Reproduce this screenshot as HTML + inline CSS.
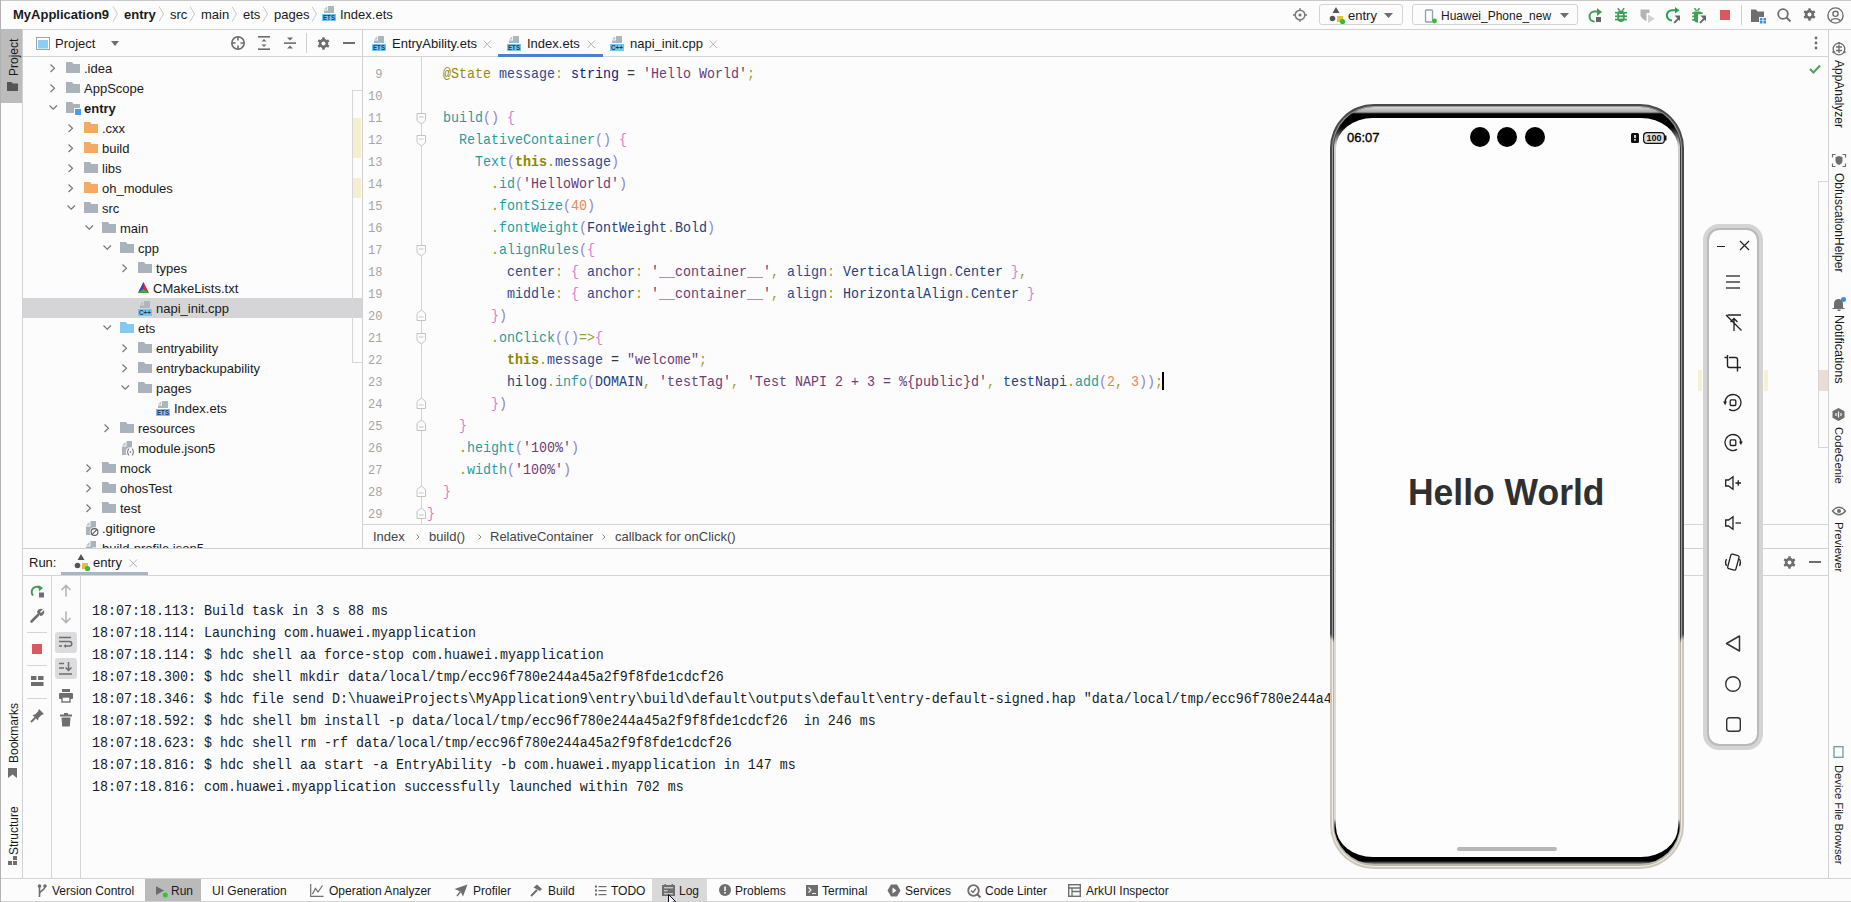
<!DOCTYPE html>
<html><head><meta charset="utf-8"><title>DevEco</title><style>*{margin:0;padding:0;box-sizing:border-box}
html,body{width:1851px;height:902px;overflow:hidden;background:#fcfcfc;font-family:"Liberation Sans",sans-serif;font-size:13px;color:#1f1f1f}
.a{position:absolute}
.t{position:absolute;white-space:pre}
svg{position:absolute;overflow:visible}
.clip{position:absolute;left:0;top:0;overflow:hidden}
</style></head><body>
<div class="a" style="left:0px;top:0px;width:1851px;height:29px;background:#fcfcfc;"></div>
<div class="a" style="left:0px;top:0px;width:1851px;height:1px;background:#c9c9cb;"></div>
<div class="a" style="left:0px;top:29px;width:1851px;height:1px;background:#d1d1d1;"></div>
<div class="t" style="left:13px;top:5.00px;font-size:13px;line-height:19px;color:#1a1a1a;font-weight:bold;">MyApplication9</div>
<div class="t" style="left:124px;top:5.00px;font-size:13px;line-height:19px;color:#1a1a1a;font-weight:bold;">entry</div>
<div class="t" style="left:170px;top:5.00px;font-size:13px;line-height:19px;color:#1a1a1a;">src</div>
<div class="t" style="left:201px;top:5.00px;font-size:13px;line-height:19px;color:#1a1a1a;">main</div>
<div class="t" style="left:243px;top:5.00px;font-size:13px;line-height:19px;color:#1a1a1a;">ets</div>
<div class="t" style="left:274px;top:5.00px;font-size:13px;line-height:19px;color:#1a1a1a;">pages</div>
<svg style="left:112px;top:6px;" width="7" height="16" viewBox="0 0 7 16"><path d="M1 0.5L5.5 8L1 15.5" fill="none" stroke="#c8c8c8" stroke-width="1"/></svg>
<svg style="left:158px;top:6px;" width="7" height="16" viewBox="0 0 7 16"><path d="M1 0.5L5.5 8L1 15.5" fill="none" stroke="#c8c8c8" stroke-width="1"/></svg>
<svg style="left:189px;top:6px;" width="7" height="16" viewBox="0 0 7 16"><path d="M1 0.5L5.5 8L1 15.5" fill="none" stroke="#c8c8c8" stroke-width="1"/></svg>
<svg style="left:231px;top:6px;" width="7" height="16" viewBox="0 0 7 16"><path d="M1 0.5L5.5 8L1 15.5" fill="none" stroke="#c8c8c8" stroke-width="1"/></svg>
<svg style="left:262px;top:6px;" width="7" height="16" viewBox="0 0 7 16"><path d="M1 0.5L5.5 8L1 15.5" fill="none" stroke="#c8c8c8" stroke-width="1"/></svg>
<svg style="left:311px;top:6px;" width="7" height="16" viewBox="0 0 7 16"><path d="M1 0.5L5.5 8L1 15.5" fill="none" stroke="#c8c8c8" stroke-width="1"/></svg>
<svg style="left:322px;top:6px;" width="14" height="16" viewBox="0 0 14 16"><path d="M6 0H12V7H2V4.5H6Z" fill="#adb5bd"/><path d="M2 3.5L5.2 0.3V3.5Z" fill="#b8c0c7"/><rect x="0" y="8" width="14" height="7" fill="#78c6f0"/><text x="7" y="14.4" font-family="Liberation Sans" font-weight="bold" font-size="7.2" text-anchor="middle" fill="#28384a" textLength="12" lengthAdjust="spacingAndGlyphs">ETS</text></svg>
<div class="t" style="left:340px;top:5.00px;font-size:13px;line-height:19px;color:#1a1a1a;">Index.ets</div>
<svg style="left:1293px;top:8px;" width="14" height="14" viewBox="0 0 14 14"><circle cx="7" cy="7" r="4.8" fill="none" stroke="#7a7a7a" stroke-width="1.6"/><circle cx="7" cy="7" r="1.6" fill="#7a7a7a"/><path d="M7 0V2.5M7 11.5V14M0 7H2.5M11.5 7H14" stroke="#7a7a7a" stroke-width="1.3"/></svg>
<div class="a" style="left:1319px;top:4px;width:84px;height:21px;background:transparent;border:1px solid #d3d3d6;border-radius:3px;"></div>
<svg style="left:1329px;top:6px;" width="18" height="18" viewBox="0 0 18 18"><path d="M7 1L10.5 7H3.5Z" fill="#555"/><circle cx="3.5" cy="12.5" r="2.8" fill="#555"/><rect x="8" y="10" width="6" height="6" fill="#e8c22e"/><circle cx="13.5" cy="15.5" r="2.6" fill="#2fbf3a"/></svg>
<div class="t" style="left:1348px;top:6.00px;font-size:13px;line-height:19px;color:#1a1a1a;">entry</div>
<svg style="left:1384px;top:13px;" width="9" height="5" viewBox="0 0 9 5"><path d="M0 0H9L4.5 5Z" fill="#6e6e6e"/></svg>
<div class="a" style="left:1412px;top:4px;width:166px;height:21px;background:transparent;border:1px solid #d3d3d6;border-radius:3px;"></div>
<svg style="left:1424px;top:9px;" width="14" height="15" viewBox="0 0 14 15"><rect x="1.5" y="1" width="7" height="12" rx="1" fill="none" stroke="#8fa3ad" stroke-width="1.3"/><circle cx="10.5" cy="12" r="2.4" fill="#2fbf3a"/></svg>
<div class="t" style="left:1441px;top:7.50px;font-size:12px;line-height:17px;color:#1a1a1a;">Huawei_Phone_new</div>
<svg style="left:1560px;top:13px;" width="9" height="5" viewBox="0 0 9 5"><path d="M0 0H9L4.5 5Z" fill="#6e6e6e"/></svg>
<svg style="left:1588px;top:7px;" width="15" height="16" viewBox="0 0 15 16"><path d="M6.5 14.6A5 5 0 0 1 6.5 4.6H9.5" fill="none" stroke="#3f9f55" stroke-width="2"/><path d="M9 1L14 5L9 9Z" fill="#3f9f55"/><rect x="8" y="10" width="5" height="5" fill="#666"/></svg>
<svg style="left:1614px;top:8px;" width="14" height="15" viewBox="0 0 14 15"><rect x="3.3" y="2.6" width="7.4" height="11.4" rx="3.7" fill="#3f9f55"/><rect x="1" y="3.9" width="12" height="1.7" fill="#3f9f55"/><rect x="1" y="7.4" width="12" height="1.7" fill="#3f9f55"/><rect x="1" y="10.7" width="12" height="1.7" fill="#3f9f55"/><path d="M3.8 0.2L5.8 2.8M10.2 0.2L8.2 2.8" stroke="#3f9f55" stroke-width="1.5"/><rect x="5" y="6" width="4" height="1.3" fill="#fcfcfc"/><rect x="5" y="9.3" width="4" height="1.3" fill="#fcfcfc"/></svg>
<svg style="left:1640px;top:9px;" width="16" height="15" viewBox="0 0 16 15"><path d="M0.5 0.5H9.5V4H6.5V11.5Q6.5 12 6 12Q2.5 10.5 0.5 7Z" fill="#b4b4b4"/><path d="M8 5.5L15 9.8L8 14Z" fill="#d2d2d2"/></svg>
<svg style="left:1665px;top:6px;" width="17" height="18" viewBox="0 0 17 18"><path d="M7 14.5A5 5 0 0 1 7 4.2H10.5" fill="none" stroke="#22a64c" stroke-width="2"/><path d="M10 1L14.5 4.2L10 7.5Z" fill="#22a64c"/><path d="M9.2 16.8L14.2 11.8" stroke="#666" stroke-width="1.9"/><path d="M9.5 9.5H15V15Z" fill="#666"/></svg>
<svg style="left:1692px;top:8px;" width="16" height="16" viewBox="0 0 16 16"><path d="M2.5 0.3L4.5 2.8M7.5 0.3L5.5 2.8" stroke="#3f9f55" stroke-width="1.5"/><path d="M2 3.5H8.5V6.2H6V14.5H4.5Q2 14 2 11Z" fill="#3f9f55"/><rect x="0.2" y="4.3" width="10.5" height="1.7" fill="#3f9f55"/><rect x="0.2" y="7.6" width="5.8" height="1.7" fill="#3f9f55"/><rect x="0.2" y="11" width="5.8" height="1.7" fill="#3f9f55"/><path d="M8 14.8L13 9.8" stroke="#666" stroke-width="1.9"/><path d="M8.3 7.5H14V13.2Z" fill="#666"/></svg>
<div class="a" style="left:1720px;top:10px;width:10px;height:10px;background:#dc5760;"></div>
<div class="a" style="left:1741px;top:5px;width:1px;height:20px;background:#d0d0d0;"></div>
<svg style="left:1751px;top:9px;" width="15" height="14" viewBox="0 0 15 14"><path d="M0 0.5H5L6.5 2.5H13V8H8V13H0Z" fill="#6e6e6e"/><rect x="9" y="9" width="2.5" height="2.5" fill="#3b8be8"/><rect x="12.5" y="9" width="2.5" height="2.5" fill="#3b8be8"/><rect x="9" y="12" width="2.5" height="2.5" fill="#3b8be8"/><rect x="12.5" y="12" width="2.5" height="2.5" fill="#3b8be8"/></svg>
<svg style="left:1777px;top:8px;" width="15" height="15" viewBox="0 0 15 15"><circle cx="6" cy="6" r="4.8" fill="none" stroke="#6e6e6e" stroke-width="1.8"/><path d="M9.5 9.5L13.5 13.5" stroke="#6e6e6e" stroke-width="2"/></svg>
<svg style="left:1803px;top:8px;" width="13" height="13" viewBox="0 0 13 13"><rect x="5.2" y="0.3" width="2.6" height="12.4" rx="0.6" fill="#6e6e6e" transform="rotate(0 6.5 6.5)"/><rect x="5.2" y="0.3" width="2.6" height="12.4" rx="0.6" fill="#6e6e6e" transform="rotate(60 6.5 6.5)"/><rect x="5.2" y="0.3" width="2.6" height="12.4" rx="0.6" fill="#6e6e6e" transform="rotate(120 6.5 6.5)"/><circle cx="6.5" cy="6.5" r="4.7" fill="#6e6e6e"/><circle cx="6.5" cy="6.5" r="2" fill="#fcfcfc"/></svg>
<svg style="left:1827px;top:7px;" width="17" height="17" viewBox="0 0 17 17"><circle cx="8.5" cy="8.5" r="7.6" fill="none" stroke="#6e6e6e" stroke-width="1.4"/><circle cx="8.5" cy="6.8" r="2.6" fill="none" stroke="#6e6e6e" stroke-width="1.4"/><path d="M3.5 14A5.5 4 0 0 1 13.5 14" fill="none" stroke="#6e6e6e" stroke-width="1.4"/></svg>
<div class="a" style="left:0px;top:30px;width:22px;height:848px;background:#fcfcfc;"></div>
<div class="a" style="left:22px;top:30px;width:1px;height:848px;background:#d1d1d1;"></div>
<div class="a" style="left:0px;top:29px;width:22px;height:74px;background:#bcbcbc;"></div>
<div class="a" style="left:5.5px;top:76px;width:16px;height:10px;overflow:visible"><div style="position:absolute;left:0;top:0;height:16px;transform-origin:0 0;transform:rotate(-90deg);font-size:12px;line-height:16px;color:#1a1a1a;white-space:pre">Project</div></div>
<svg style="left:7px;top:82px;" width="12" height="10" viewBox="0 0 12 10"><path d="M0 0H4.5L6 1.5H11V9H0Z" fill="#555"/></svg>
<div class="a" style="left:5.5px;top:763px;width:16px;height:10px;overflow:visible"><div style="position:absolute;left:0;top:0;height:16px;transform-origin:0 0;transform:rotate(-90deg);font-size:12px;line-height:16px;color:#1a1a1a;white-space:pre">Bookmarks</div></div>
<svg style="left:8px;top:768px;" width="10" height="11" viewBox="0 0 10 11"><path d="M0 0H9V10L4.5 6.5L0 10Z" fill="#6e6e6e"/></svg>
<div class="a" style="left:5.5px;top:855px;width:16px;height:10px;overflow:visible"><div style="position:absolute;left:0;top:0;height:16px;transform-origin:0 0;transform:rotate(-90deg);font-size:12px;line-height:16px;color:#1a1a1a;white-space:pre">Structure</div></div>
<svg style="left:8px;top:856px;" width="10" height="10" viewBox="0 0 10 10"><rect x="5" y="0" width="4" height="4" fill="#6e6e6e"/><rect x="0" y="5" width="4" height="4" fill="#6e6e6e"/><rect x="5" y="5" width="4" height="4" fill="#6e6e6e"/></svg>
<div class="clip" style="width:1851px;height:548px"><div class="a" style="left:23px;top:30px;width:339px;height:518px;background:#fcfcfc;"></div>
<div class="a" style="left:23px;top:56px;width:339px;height:1px;background:#d5d5d5;"></div>
<div class="a" style="left:362px;top:30px;width:1px;height:518px;background:#d1d1d1;"></div>
<svg style="left:36px;top:37px;" width="15" height="14" viewBox="0 0 15 14"><rect x="0.5" y="0.5" width="13" height="12" fill="#fff" stroke="#9aa4ad"/><rect x="2" y="3" width="10" height="8.5" fill="#8ccdf2"/></svg>
<div class="t" style="left:55px;top:34.00px;font-size:13px;line-height:19px;color:#1a1a1a;">Project</div>
<svg style="left:111px;top:41px;" width="9" height="5" viewBox="0 0 9 5"><path d="M0 0H8L4 5Z" fill="#6e6e6e"/></svg>
<svg style="left:231px;top:36px;" width="15" height="15" viewBox="0 0 15 15"><circle cx="7" cy="7" r="6.2" fill="none" stroke="#6e6e6e" stroke-width="1.6"/><path d="M7 1V4.6M7 9.4V13M1 7H4.6M9.4 7H13" stroke="#6e6e6e" stroke-width="1.6"/></svg>
<svg style="left:258px;top:36px;" width="13" height="15" viewBox="0 0 13 15"><rect x="0" y="0" width="12" height="1.6" fill="#6e6e6e"/><rect x="0" y="12.4" width="12" height="1.6" fill="#6e6e6e"/><path d="M3.5 5.5L6 3L8.5 5.5ZM3.5 8.5L6 11L8.5 8.5Z" fill="#6e6e6e"/></svg>
<svg style="left:284px;top:37px;" width="13" height="13" viewBox="0 0 13 13"><rect x="0" y="5.3" width="12" height="1.6" fill="#6e6e6e"/><path d="M3 0.5H9L6 3.5ZM3 11.5H9L6 8.5Z" fill="#6e6e6e"/></svg>
<div class="a" style="left:306px;top:33px;width:1px;height:20px;background:#d0d0d0;"></div>
<svg style="left:317px;top:37px;" width="13" height="13" viewBox="0 0 13 13"><rect x="5.2" y="0.3" width="2.6" height="12.4" rx="0.6" fill="#6e6e6e" transform="rotate(0 6.5 6.5)"/><rect x="5.2" y="0.3" width="2.6" height="12.4" rx="0.6" fill="#6e6e6e" transform="rotate(60 6.5 6.5)"/><rect x="5.2" y="0.3" width="2.6" height="12.4" rx="0.6" fill="#6e6e6e" transform="rotate(120 6.5 6.5)"/><circle cx="6.5" cy="6.5" r="4.7" fill="#6e6e6e"/><circle cx="6.5" cy="6.5" r="2" fill="#fcfcfc"/></svg>
<div class="a" style="left:343px;top:42px;width:12px;height:2px;background:#6e6e6e;"></div>
<svg style="left:50px;top:63.5px;" width="5" height="9" viewBox="0 0 5 9"><path d="M0.5 0.5L4.5 4.25L0.5 8" fill="none" stroke="#757575" stroke-width="1.15"/></svg>
<svg style="left:66px;top:62px;" width="16" height="14" viewBox="0 0 16 14"><path d="M0 0H6L7.5 2H14V11H0Z" fill="#aab3bc"/></svg>
<div class="t" style="left:84px;top:59.00px;font-size:13px;line-height:19px;color:#1a1a1a;">.idea</div>
<svg style="left:50px;top:83.5px;" width="5" height="9" viewBox="0 0 5 9"><path d="M0.5 0.5L4.5 4.25L0.5 8" fill="none" stroke="#757575" stroke-width="1.15"/></svg>
<svg style="left:66px;top:82px;" width="16" height="14" viewBox="0 0 16 14"><path d="M0 0H6L7.5 2H14V11H0Z" fill="#aab3bc"/></svg>
<div class="t" style="left:84px;top:79.00px;font-size:13px;line-height:19px;color:#1a1a1a;">AppScope</div>
<svg style="left:48.5px;top:105px;" width="9" height="5" viewBox="0 0 9 5"><path d="M0.5 0.5L4.25 4.25L8 0.5" fill="none" stroke="#757575" stroke-width="1.15"/></svg>
<svg style="left:66px;top:102px;" width="16" height="14" viewBox="0 0 16 14"><path d="M0 0H6L7.5 2H14V11H0Z" fill="#aab3bc"/><rect x="8" y="6" width="7" height="7" fill="#fcfcfc"/><rect x="9" y="7" width="6" height="6" fill="#4a9ff0"/></svg>
<div class="t" style="left:84px;top:99.00px;font-size:13px;line-height:19px;color:#1a1a1a;font-weight:bold;">entry</div>
<svg style="left:68px;top:123.5px;" width="5" height="9" viewBox="0 0 5 9"><path d="M0.5 0.5L4.5 4.25L0.5 8" fill="none" stroke="#757575" stroke-width="1.15"/></svg>
<svg style="left:84px;top:122px;" width="16" height="14" viewBox="0 0 16 14"><path d="M0 0H6L7.5 2H14V11H0Z" fill="#f4aa62"/></svg>
<div class="t" style="left:102px;top:119.00px;font-size:13px;line-height:19px;color:#1a1a1a;">.cxx</div>
<svg style="left:68px;top:143.5px;" width="5" height="9" viewBox="0 0 5 9"><path d="M0.5 0.5L4.5 4.25L0.5 8" fill="none" stroke="#757575" stroke-width="1.15"/></svg>
<svg style="left:84px;top:142px;" width="16" height="14" viewBox="0 0 16 14"><path d="M0 0H6L7.5 2H14V11H0Z" fill="#f4aa62"/></svg>
<div class="t" style="left:102px;top:139.00px;font-size:13px;line-height:19px;color:#1a1a1a;">build</div>
<svg style="left:68px;top:163.5px;" width="5" height="9" viewBox="0 0 5 9"><path d="M0.5 0.5L4.5 4.25L0.5 8" fill="none" stroke="#757575" stroke-width="1.15"/></svg>
<svg style="left:84px;top:162px;" width="16" height="14" viewBox="0 0 16 14"><path d="M0 0H6L7.5 2H14V11H0Z" fill="#aab3bc"/></svg>
<div class="t" style="left:102px;top:159.00px;font-size:13px;line-height:19px;color:#1a1a1a;">libs</div>
<svg style="left:68px;top:183.5px;" width="5" height="9" viewBox="0 0 5 9"><path d="M0.5 0.5L4.5 4.25L0.5 8" fill="none" stroke="#757575" stroke-width="1.15"/></svg>
<svg style="left:84px;top:182px;" width="16" height="14" viewBox="0 0 16 14"><path d="M0 0H6L7.5 2H14V11H0Z" fill="#f4aa62"/></svg>
<div class="t" style="left:102px;top:179.00px;font-size:13px;line-height:19px;color:#1a1a1a;">oh_modules</div>
<svg style="left:66.5px;top:205px;" width="9" height="5" viewBox="0 0 9 5"><path d="M0.5 0.5L4.25 4.25L8 0.5" fill="none" stroke="#757575" stroke-width="1.15"/></svg>
<svg style="left:84px;top:202px;" width="16" height="14" viewBox="0 0 16 14"><path d="M0 0H6L7.5 2H14V11H0Z" fill="#aab3bc"/></svg>
<div class="t" style="left:102px;top:199.00px;font-size:13px;line-height:19px;color:#1a1a1a;">src</div>
<svg style="left:84.5px;top:225px;" width="9" height="5" viewBox="0 0 9 5"><path d="M0.5 0.5L4.25 4.25L8 0.5" fill="none" stroke="#757575" stroke-width="1.15"/></svg>
<svg style="left:102px;top:222px;" width="16" height="14" viewBox="0 0 16 14"><path d="M0 0H6L7.5 2H14V11H0Z" fill="#aab3bc"/></svg>
<div class="t" style="left:120px;top:219.00px;font-size:13px;line-height:19px;color:#1a1a1a;">main</div>
<svg style="left:102.5px;top:245px;" width="9" height="5" viewBox="0 0 9 5"><path d="M0.5 0.5L4.25 4.25L8 0.5" fill="none" stroke="#757575" stroke-width="1.15"/></svg>
<svg style="left:120px;top:242px;" width="16" height="14" viewBox="0 0 16 14"><path d="M0 0H6L7.5 2H14V11H0Z" fill="#aab3bc"/></svg>
<div class="t" style="left:138px;top:239.00px;font-size:13px;line-height:19px;color:#1a1a1a;">cpp</div>
<svg style="left:122px;top:263.5px;" width="5" height="9" viewBox="0 0 5 9"><path d="M0.5 0.5L4.5 4.25L0.5 8" fill="none" stroke="#757575" stroke-width="1.15"/></svg>
<svg style="left:138px;top:262px;" width="16" height="14" viewBox="0 0 16 14"><path d="M0 0H6L7.5 2H14V11H0Z" fill="#aab3bc"/></svg>
<div class="t" style="left:156px;top:259.00px;font-size:13px;line-height:19px;color:#1a1a1a;">types</div>
<svg style="left:138px;top:282px;" width="12" height="12" viewBox="0 0 12 12"><path d="M5.5 0L0 11H11Z" fill="#d9263a"/><path d="M5.5 0L0 11L5.5 7Z" fill="#4a3bd2"/><path d="M0 11H11L5.5 7Z" fill="#22c025"/></svg>
<div class="t" style="left:153px;top:279.00px;font-size:13px;line-height:19px;color:#1a1a1a;">CMakeLists.txt</div>
<div class="a" style="left:23px;top:298px;width:339px;height:20px;background:#d5d5d7;"></div>
<svg style="left:138px;top:301px;" width="14" height="16" viewBox="0 0 14 16"><path d="M6 0H12V7H2V4.5H6Z" fill="#adb5bd"/><path d="M2 3.5L5.2 0.3V3.5Z" fill="#b8c0c7"/><rect x="0" y="8" width="14" height="7" fill="#78c6f0"/><text x="7" y="14.4" font-family="Liberation Sans" font-weight="bold" font-size="7.2" text-anchor="middle" fill="#28384a" textLength="12" lengthAdjust="spacingAndGlyphs">C++</text></svg>
<div class="t" style="left:156px;top:299.00px;font-size:13px;line-height:19px;color:#1a1a1a;">napi_init.cpp</div>
<svg style="left:102.5px;top:325px;" width="9" height="5" viewBox="0 0 9 5"><path d="M0.5 0.5L4.25 4.25L8 0.5" fill="none" stroke="#757575" stroke-width="1.15"/></svg>
<svg style="left:120px;top:322px;" width="16" height="14" viewBox="0 0 16 14"><path d="M0 0H6L7.5 2H14V11H0Z" fill="#85c9f1"/></svg>
<div class="t" style="left:138px;top:319.00px;font-size:13px;line-height:19px;color:#1a1a1a;">ets</div>
<svg style="left:122px;top:343.5px;" width="5" height="9" viewBox="0 0 5 9"><path d="M0.5 0.5L4.5 4.25L0.5 8" fill="none" stroke="#757575" stroke-width="1.15"/></svg>
<svg style="left:138px;top:342px;" width="16" height="14" viewBox="0 0 16 14"><path d="M0 0H6L7.5 2H14V11H0Z" fill="#aab3bc"/></svg>
<div class="t" style="left:156px;top:339.00px;font-size:13px;line-height:19px;color:#1a1a1a;">entryability</div>
<svg style="left:122px;top:363.5px;" width="5" height="9" viewBox="0 0 5 9"><path d="M0.5 0.5L4.5 4.25L0.5 8" fill="none" stroke="#757575" stroke-width="1.15"/></svg>
<svg style="left:138px;top:362px;" width="16" height="14" viewBox="0 0 16 14"><path d="M0 0H6L7.5 2H14V11H0Z" fill="#aab3bc"/></svg>
<div class="t" style="left:156px;top:359.00px;font-size:13px;line-height:19px;color:#1a1a1a;">entrybackupability</div>
<svg style="left:120.5px;top:385px;" width="9" height="5" viewBox="0 0 9 5"><path d="M0.5 0.5L4.25 4.25L8 0.5" fill="none" stroke="#757575" stroke-width="1.15"/></svg>
<svg style="left:138px;top:382px;" width="16" height="14" viewBox="0 0 16 14"><path d="M0 0H6L7.5 2H14V11H0Z" fill="#aab3bc"/></svg>
<div class="t" style="left:156px;top:379.00px;font-size:13px;line-height:19px;color:#1a1a1a;">pages</div>
<svg style="left:156px;top:401px;" width="14" height="16" viewBox="0 0 14 16"><path d="M6 0H12V7H2V4.5H6Z" fill="#adb5bd"/><path d="M2 3.5L5.2 0.3V3.5Z" fill="#b8c0c7"/><rect x="0" y="8" width="14" height="7" fill="#78c6f0"/><text x="7" y="14.4" font-family="Liberation Sans" font-weight="bold" font-size="7.2" text-anchor="middle" fill="#28384a" textLength="12" lengthAdjust="spacingAndGlyphs">ETS</text></svg>
<div class="t" style="left:174px;top:399.00px;font-size:13px;line-height:19px;color:#1a1a1a;">Index.ets</div>
<svg style="left:104px;top:423.5px;" width="5" height="9" viewBox="0 0 5 9"><path d="M0.5 0.5L4.5 4.25L0.5 8" fill="none" stroke="#757575" stroke-width="1.15"/></svg>
<svg style="left:120px;top:422px;" width="16" height="14" viewBox="0 0 16 14"><path d="M0 0H6L7.5 2H14V11H0Z" fill="#aab3bc"/></svg>
<div class="t" style="left:138px;top:419.00px;font-size:13px;line-height:19px;color:#1a1a1a;">resources</div>
<svg style="left:120px;top:441px;" width="16" height="16" viewBox="0 0 16 16"><path d="M6.5 0H12V14H2V5.5H6.5Z" fill="#aab3bc"/><path d="M2 4.5L5.5 1V4.5Z" fill="#b5bdc5"/><circle cx="10.5" cy="11" r="4.8" fill="#fcfcfc"/><path d="M9.2 7.8Q8 7.8 8 9V10.3L7.2 11L8 11.7V13Q8 14.2 9.2 14.2M11.8 7.8Q13 7.8 13 9V10.3L13.8 11L13 11.7V13Q13 14.2 11.8 14.2" fill="none" stroke="#555" stroke-width="0.9"/><circle cx="10.5" cy="11" r="0.8" fill="#555"/></svg>
<div class="t" style="left:138px;top:439.00px;font-size:13px;line-height:19px;color:#1a1a1a;">module.json5</div>
<svg style="left:86px;top:463.5px;" width="5" height="9" viewBox="0 0 5 9"><path d="M0.5 0.5L4.5 4.25L0.5 8" fill="none" stroke="#757575" stroke-width="1.15"/></svg>
<svg style="left:102px;top:462px;" width="16" height="14" viewBox="0 0 16 14"><path d="M0 0H6L7.5 2H14V11H0Z" fill="#aab3bc"/></svg>
<div class="t" style="left:120px;top:459.00px;font-size:13px;line-height:19px;color:#1a1a1a;">mock</div>
<svg style="left:86px;top:483.5px;" width="5" height="9" viewBox="0 0 5 9"><path d="M0.5 0.5L4.5 4.25L0.5 8" fill="none" stroke="#757575" stroke-width="1.15"/></svg>
<svg style="left:102px;top:482px;" width="16" height="14" viewBox="0 0 16 14"><path d="M0 0H6L7.5 2H14V11H0Z" fill="#aab3bc"/></svg>
<div class="t" style="left:120px;top:479.00px;font-size:13px;line-height:19px;color:#1a1a1a;">ohosTest</div>
<svg style="left:86px;top:503.5px;" width="5" height="9" viewBox="0 0 5 9"><path d="M0.5 0.5L4.5 4.25L0.5 8" fill="none" stroke="#757575" stroke-width="1.15"/></svg>
<svg style="left:102px;top:502px;" width="16" height="14" viewBox="0 0 16 14"><path d="M0 0H6L7.5 2H14V11H0Z" fill="#aab3bc"/></svg>
<div class="t" style="left:120px;top:499.00px;font-size:13px;line-height:19px;color:#1a1a1a;">test</div>
<svg style="left:84px;top:521px;" width="16" height="16" viewBox="0 0 16 16"><path d="M6.5 0H12V14H2V5.5H6.5Z" fill="#aab3bc"/><path d="M2 4.5L5.5 1V4.5Z" fill="#b5bdc5"/><circle cx="10.5" cy="11" r="4.8" fill="#fcfcfc"/><circle cx="10.5" cy="11" r="3.4" fill="none" stroke="#555" stroke-width="1.1"/><path d="M8.2 13.3L12.8 8.7" stroke="#555" stroke-width="1.1"/></svg>
<div class="t" style="left:102px;top:519.00px;font-size:13px;line-height:19px;color:#1a1a1a;">.gitignore</div>
<svg style="left:84px;top:541px;" width="16" height="16" viewBox="0 0 16 16"><path d="M6.5 0H12V14H2V5.5H6.5Z" fill="#aab3bc"/><path d="M2 4.5L5.5 1V4.5Z" fill="#b5bdc5"/><circle cx="10.5" cy="11" r="4.8" fill="#fcfcfc"/><path d="M9.2 7.8Q8 7.8 8 9V10.3L7.2 11L8 11.7V13Q8 14.2 9.2 14.2M11.8 7.8Q13 7.8 13 9V10.3L13.8 11L13 11.7V13Q13 14.2 11.8 14.2" fill="none" stroke="#555" stroke-width="0.9"/><circle cx="10.5" cy="11" r="0.8" fill="#555"/></svg>
<div class="t" style="left:102px;top:539.00px;font-size:13px;line-height:19px;color:#1a1a1a;">build-profile.json5</div>
<div class="a" style="left:352px;top:90px;width:10px;height:273px;background:transparent;border:1px solid #d6d6d6;border-right:none;box-sizing:border-box"></div>
<div class="a" style="left:353px;top:118px;width:8px;height:40px;background:#f6efcf;"></div>
<div class="a" style="left:353px;top:178px;width:8px;height:20px;background:#f6efcf;"></div>
<div class="a" style="left:363px;top:30px;width:1465px;height:518px;background:#fcfcfc;"></div>
<div class="a" style="left:363px;top:56px;width:1465px;height:1px;background:#d5d5d5;"></div>
<svg style="left:372px;top:36px;" width="14" height="16" viewBox="0 0 14 16"><path d="M6 0H12V7H2V4.5H6Z" fill="#adb5bd"/><path d="M2 3.5L5.2 0.3V3.5Z" fill="#b8c0c7"/><rect x="0" y="8" width="14" height="7" fill="#78c6f0"/><text x="7" y="14.4" font-family="Liberation Sans" font-weight="bold" font-size="7.2" text-anchor="middle" fill="#28384a" textLength="12" lengthAdjust="spacingAndGlyphs">ETS</text></svg>
<div class="t" style="left:392px;top:34.00px;font-size:13px;line-height:19px;color:#1a1a1a;">EntryAbility.ets</div>
<svg style="left:483px;top:40px;" width="9" height="9" viewBox="0 0 9 9"><path d="M0.5 0.5L8 8M8 0.5L0.5 8" stroke="#b5b5b5" stroke-width="1"/></svg>
<svg style="left:507px;top:36px;" width="14" height="16" viewBox="0 0 14 16"><path d="M6 0H12V7H2V4.5H6Z" fill="#adb5bd"/><path d="M2 3.5L5.2 0.3V3.5Z" fill="#b8c0c7"/><rect x="0" y="8" width="14" height="7" fill="#78c6f0"/><text x="7" y="14.4" font-family="Liberation Sans" font-weight="bold" font-size="7.2" text-anchor="middle" fill="#28384a" textLength="12" lengthAdjust="spacingAndGlyphs">ETS</text></svg>
<div class="t" style="left:527px;top:34.00px;font-size:13px;line-height:19px;color:#1a1a1a;">Index.ets</div>
<svg style="left:587px;top:40px;" width="9" height="9" viewBox="0 0 9 9"><path d="M0.5 0.5L8 8M8 0.5L0.5 8" stroke="#b5b5b5" stroke-width="1"/></svg>
<svg style="left:610px;top:36px;" width="14" height="16" viewBox="0 0 14 16"><path d="M6 0H12V7H2V4.5H6Z" fill="#adb5bd"/><path d="M2 3.5L5.2 0.3V3.5Z" fill="#b8c0c7"/><rect x="0" y="8" width="14" height="7" fill="#78c6f0"/><text x="7" y="14.4" font-family="Liberation Sans" font-weight="bold" font-size="7.2" text-anchor="middle" fill="#28384a" textLength="12" lengthAdjust="spacingAndGlyphs">C++</text></svg>
<div class="t" style="left:630px;top:34.00px;font-size:13px;line-height:19px;color:#1a1a1a;">napi_init.cpp</div>
<svg style="left:709px;top:40px;" width="9" height="9" viewBox="0 0 9 9"><path d="M0.5 0.5L8 8M8 0.5L0.5 8" stroke="#b5b5b5" stroke-width="1"/></svg>
<div class="a" style="left:498px;top:54px;width:105px;height:3px;background:#4a82c9;"></div>
<svg style="left:1814px;top:36px;" width="4" height="14" viewBox="0 0 4 14"><circle cx="2" cy="2" r="1.4" fill="#6e6e6e"/><circle cx="2" cy="7" r="1.4" fill="#6e6e6e"/><circle cx="2" cy="12" r="1.4" fill="#6e6e6e"/></svg>
<svg style="left:1809px;top:64px;" width="12" height="10" viewBox="0 0 12 10"><path d="M1 5L4.5 8.5L11 1.5" fill="none" stroke="#4fa45c" stroke-width="2.2"/></svg>
<div class="a" style="left:421px;top:57px;width:1px;height:467px;background:#d3d3d6;"></div>
<div class="t" style="left:375.3px;top:66.50px;font-size:12px;line-height:17px;color:#a5a5a8;font-family:'Liberation Mono',monospace;">9</div>
<div class="t" style="left:427px;top:64.00px;font-size:14.6px;line-height:21px;color:#3a3a3a;font-family:'Liberation Mono',monospace;transform:scaleX(0.9132420091324202);transform-origin:0 0;"><span style="color:#3a3a3a">  </span><span style="color:#9e880d">@State</span><span style="color:#3a3a3a"> </span><span style="color:#2c4a96">message</span><span style="color:#9c9c2a">:</span><span style="color:#3a3a3a"> </span><span style="color:#0a1a80">string</span><span style="color:#3a3a3a"> = </span><span style="color:#6d3b76">'Hello World'</span><span style="color:#9c9c2a">;</span></div>
<div class="t" style="left:368.1px;top:88.50px;font-size:12px;line-height:17px;color:#a5a5a8;font-family:'Liberation Mono',monospace;">10</div>
<div class="t" style="left:427px;top:86.00px;font-size:14.6px;line-height:21px;color:#3a3a3a;font-family:'Liberation Mono',monospace;transform:scaleX(0.9132420091324202);transform-origin:0 0;"></div>
<div class="t" style="left:368.1px;top:110.50px;font-size:12px;line-height:17px;color:#a5a5a8;font-family:'Liberation Mono',monospace;">11</div>
<div class="t" style="left:427px;top:108.00px;font-size:14.6px;line-height:21px;color:#3a3a3a;font-family:'Liberation Mono',monospace;transform:scaleX(0.9132420091324202);transform-origin:0 0;"><span style="color:#3a3a3a">  </span><span style="color:#1f9e9e">build</span><span style="color:#8e82d2">()</span><span style="color:#3a3a3a"> </span><span style="color:#d67ccd">{</span></div>
<svg style="left:416px;top:113px;" width="11" height="13" viewBox="0 0 11 13"><path d="M1 0.5H9.5V7.5L5.25 11L1 7.5Z" fill="#fcfcfc" stroke="#c4c4c8"/><path d="M3 4H7.5" stroke="#c4c4c8"/></svg>
<div class="t" style="left:368.1px;top:132.50px;font-size:12px;line-height:17px;color:#a5a5a8;font-family:'Liberation Mono',monospace;">12</div>
<div class="t" style="left:427px;top:130.00px;font-size:14.6px;line-height:21px;color:#3a3a3a;font-family:'Liberation Mono',monospace;transform:scaleX(0.9132420091324202);transform-origin:0 0;"><span style="color:#3a3a3a">    </span><span style="color:#1f9e9e">RelativeContainer</span><span style="color:#8e82d2">()</span><span style="color:#3a3a3a"> </span><span style="color:#d67ccd">{</span></div>
<svg style="left:416px;top:135px;" width="11" height="13" viewBox="0 0 11 13"><path d="M1 0.5H9.5V7.5L5.25 11L1 7.5Z" fill="#fcfcfc" stroke="#c4c4c8"/><path d="M3 4H7.5" stroke="#c4c4c8"/></svg>
<div class="t" style="left:368.1px;top:154.50px;font-size:12px;line-height:17px;color:#a5a5a8;font-family:'Liberation Mono',monospace;">13</div>
<div class="t" style="left:427px;top:152.00px;font-size:14.6px;line-height:21px;color:#3a3a3a;font-family:'Liberation Mono',monospace;transform:scaleX(0.9132420091324202);transform-origin:0 0;"><span style="color:#3a3a3a">      </span><span style="color:#1f9e9e">Text</span><span style="color:#8e82d2">(</span><span style="color:#8a8700;font-weight:bold">this</span><span style="color:#a39415">.</span><span style="color:#2c4a96">message</span><span style="color:#8e82d2">)</span></div>
<div class="t" style="left:368.1px;top:176.50px;font-size:12px;line-height:17px;color:#a5a5a8;font-family:'Liberation Mono',monospace;">14</div>
<div class="t" style="left:427px;top:174.00px;font-size:14.6px;line-height:21px;color:#3a3a3a;font-family:'Liberation Mono',monospace;transform:scaleX(0.9132420091324202);transform-origin:0 0;"><span style="color:#3a3a3a">        </span><span style="color:#a39415">.</span><span style="color:#1f9e9e">id</span><span style="color:#8e82d2">(</span><span style="color:#6d3b76">'HelloWorld'</span><span style="color:#8e82d2">)</span></div>
<div class="t" style="left:368.1px;top:198.50px;font-size:12px;line-height:17px;color:#a5a5a8;font-family:'Liberation Mono',monospace;">15</div>
<div class="t" style="left:427px;top:196.00px;font-size:14.6px;line-height:21px;color:#3a3a3a;font-family:'Liberation Mono',monospace;transform:scaleX(0.9132420091324202);transform-origin:0 0;"><span style="color:#3a3a3a">        </span><span style="color:#a39415">.</span><span style="color:#1f9e9e">fontSize</span><span style="color:#8e82d2">(</span><span style="color:#ea8656">40</span><span style="color:#8e82d2">)</span></div>
<div class="t" style="left:368.1px;top:220.50px;font-size:12px;line-height:17px;color:#a5a5a8;font-family:'Liberation Mono',monospace;">16</div>
<div class="t" style="left:427px;top:218.00px;font-size:14.6px;line-height:21px;color:#3a3a3a;font-family:'Liberation Mono',monospace;transform:scaleX(0.9132420091324202);transform-origin:0 0;"><span style="color:#3a3a3a">        </span><span style="color:#a39415">.</span><span style="color:#1f9e9e">fontWeight</span><span style="color:#8e82d2">(</span><span style="color:#233e84">FontWeight</span><span style="color:#a39415">.</span><span style="color:#233e84">Bold</span><span style="color:#8e82d2">)</span></div>
<div class="t" style="left:368.1px;top:242.50px;font-size:12px;line-height:17px;color:#a5a5a8;font-family:'Liberation Mono',monospace;">17</div>
<div class="t" style="left:427px;top:240.00px;font-size:14.6px;line-height:21px;color:#3a3a3a;font-family:'Liberation Mono',monospace;transform:scaleX(0.9132420091324202);transform-origin:0 0;"><span style="color:#3a3a3a">        </span><span style="color:#a39415">.</span><span style="color:#1f9e9e">alignRules</span><span style="color:#8e82d2">(</span><span style="color:#d67ccd">{</span></div>
<svg style="left:416px;top:245px;" width="11" height="13" viewBox="0 0 11 13"><path d="M1 0.5H9.5V7.5L5.25 11L1 7.5Z" fill="#fcfcfc" stroke="#c4c4c8"/><path d="M3 4H7.5" stroke="#c4c4c8"/></svg>
<div class="t" style="left:368.1px;top:264.50px;font-size:12px;line-height:17px;color:#a5a5a8;font-family:'Liberation Mono',monospace;">18</div>
<div class="t" style="left:427px;top:262.00px;font-size:14.6px;line-height:21px;color:#3a3a3a;font-family:'Liberation Mono',monospace;transform:scaleX(0.9132420091324202);transform-origin:0 0;"><span style="color:#3a3a3a">          </span><span style="color:#2c4a96">center</span><span style="color:#9c9c2a">:</span><span style="color:#3a3a3a"> </span><span style="color:#d67ccd">{</span><span style="color:#3a3a3a"> </span><span style="color:#2c4a96">anchor</span><span style="color:#9c9c2a">:</span><span style="color:#3a3a3a"> </span><span style="color:#6d3b76">'__container__'</span><span style="color:#9c9c2a">,</span><span style="color:#3a3a3a"> </span><span style="color:#2c4a96">align</span><span style="color:#9c9c2a">:</span><span style="color:#3a3a3a"> </span><span style="color:#233e84">VerticalAlign</span><span style="color:#a39415">.</span><span style="color:#233e84">Center</span><span style="color:#3a3a3a"> </span><span style="color:#d67ccd">}</span><span style="color:#9c9c2a">,</span></div>
<div class="t" style="left:368.1px;top:286.50px;font-size:12px;line-height:17px;color:#a5a5a8;font-family:'Liberation Mono',monospace;">19</div>
<div class="t" style="left:427px;top:284.00px;font-size:14.6px;line-height:21px;color:#3a3a3a;font-family:'Liberation Mono',monospace;transform:scaleX(0.9132420091324202);transform-origin:0 0;"><span style="color:#3a3a3a">          </span><span style="color:#2c4a96">middle</span><span style="color:#9c9c2a">:</span><span style="color:#3a3a3a"> </span><span style="color:#d67ccd">{</span><span style="color:#3a3a3a"> </span><span style="color:#2c4a96">anchor</span><span style="color:#9c9c2a">:</span><span style="color:#3a3a3a"> </span><span style="color:#6d3b76">'__container__'</span><span style="color:#9c9c2a">,</span><span style="color:#3a3a3a"> </span><span style="color:#2c4a96">align</span><span style="color:#9c9c2a">:</span><span style="color:#3a3a3a"> </span><span style="color:#233e84">HorizontalAlign</span><span style="color:#a39415">.</span><span style="color:#233e84">Center</span><span style="color:#3a3a3a"> </span><span style="color:#d67ccd">}</span></div>
<div class="t" style="left:368.1px;top:308.50px;font-size:12px;line-height:17px;color:#a5a5a8;font-family:'Liberation Mono',monospace;">20</div>
<div class="t" style="left:427px;top:306.00px;font-size:14.6px;line-height:21px;color:#3a3a3a;font-family:'Liberation Mono',monospace;transform:scaleX(0.9132420091324202);transform-origin:0 0;"><span style="color:#3a3a3a">        </span><span style="color:#d67ccd">}</span><span style="color:#8e82d2">)</span></div>
<svg style="left:416px;top:308.5px;" width="11" height="13" viewBox="0 0 11 13"><path d="M1 11.5H9.5V4.5L5.25 1L1 4.5Z" fill="#fcfcfc" stroke="#c4c4c8"/><path d="M3 8H7.5" stroke="#c4c4c8"/></svg>
<div class="t" style="left:368.1px;top:330.50px;font-size:12px;line-height:17px;color:#a5a5a8;font-family:'Liberation Mono',monospace;">21</div>
<div class="t" style="left:427px;top:328.00px;font-size:14.6px;line-height:21px;color:#3a3a3a;font-family:'Liberation Mono',monospace;transform:scaleX(0.9132420091324202);transform-origin:0 0;"><span style="color:#3a3a3a">        </span><span style="color:#a39415">.</span><span style="color:#1f9e9e">onClick</span><span style="color:#8e82d2">(()</span><span style="color:#9c9c2a">=&gt;</span><span style="color:#d67ccd">{</span></div>
<svg style="left:416px;top:333px;" width="11" height="13" viewBox="0 0 11 13"><path d="M1 0.5H9.5V7.5L5.25 11L1 7.5Z" fill="#fcfcfc" stroke="#c4c4c8"/><path d="M3 4H7.5" stroke="#c4c4c8"/></svg>
<div class="t" style="left:368.1px;top:352.50px;font-size:12px;line-height:17px;color:#a5a5a8;font-family:'Liberation Mono',monospace;">22</div>
<div class="t" style="left:427px;top:350.00px;font-size:14.6px;line-height:21px;color:#3a3a3a;font-family:'Liberation Mono',monospace;transform:scaleX(0.9132420091324202);transform-origin:0 0;"><span style="color:#3a3a3a">          </span><span style="color:#8a8700;font-weight:bold">this</span><span style="color:#a39415">.</span><span style="color:#2c4a96">message</span><span style="color:#3a3a3a"> = </span><span style="color:#6d3b76">"welcome"</span><span style="color:#9c9c2a">;</span></div>
<div class="t" style="left:368.1px;top:374.50px;font-size:12px;line-height:17px;color:#a5a5a8;font-family:'Liberation Mono',monospace;">23</div>
<div class="t" style="left:427px;top:372.00px;font-size:14.6px;line-height:21px;color:#3a3a3a;font-family:'Liberation Mono',monospace;transform:scaleX(0.9132420091324202);transform-origin:0 0;"><span style="color:#3a3a3a">          </span><span style="color:#233e84">hilog</span><span style="color:#a39415">.</span><span style="color:#1f9e9e">info</span><span style="color:#8e82d2">(</span><span style="color:#233e84">DOMAIN</span><span style="color:#9c9c2a">,</span><span style="color:#3a3a3a"> </span><span style="color:#6d3b76">'testTag'</span><span style="color:#9c9c2a">,</span><span style="color:#3a3a3a"> </span><span style="color:#6d3b76">'Test NAPI 2 + 3 = %{public}d'</span><span style="color:#9c9c2a">,</span><span style="color:#3a3a3a"> </span><span style="color:#233e84">testNapi</span><span style="color:#a39415">.</span><span style="color:#1f9e9e">add</span><span style="color:#8e82d2">(</span><span style="color:#ea8656">2</span><span style="color:#9c9c2a">,</span><span style="color:#3a3a3a"> </span><span style="color:#ea8656">3</span><span style="color:#8e82d2">))</span><span style="color:#9c9c2a">;</span></div>
<div class="t" style="left:368.1px;top:396.50px;font-size:12px;line-height:17px;color:#a5a5a8;font-family:'Liberation Mono',monospace;">24</div>
<div class="t" style="left:427px;top:394.00px;font-size:14.6px;line-height:21px;color:#3a3a3a;font-family:'Liberation Mono',monospace;transform:scaleX(0.9132420091324202);transform-origin:0 0;"><span style="color:#3a3a3a">        </span><span style="color:#d67ccd">}</span><span style="color:#8e82d2">)</span></div>
<svg style="left:416px;top:396.5px;" width="11" height="13" viewBox="0 0 11 13"><path d="M1 11.5H9.5V4.5L5.25 1L1 4.5Z" fill="#fcfcfc" stroke="#c4c4c8"/><path d="M3 8H7.5" stroke="#c4c4c8"/></svg>
<div class="t" style="left:368.1px;top:418.50px;font-size:12px;line-height:17px;color:#a5a5a8;font-family:'Liberation Mono',monospace;">25</div>
<div class="t" style="left:427px;top:416.00px;font-size:14.6px;line-height:21px;color:#3a3a3a;font-family:'Liberation Mono',monospace;transform:scaleX(0.9132420091324202);transform-origin:0 0;"><span style="color:#3a3a3a">    </span><span style="color:#d67ccd">}</span></div>
<svg style="left:416px;top:418.5px;" width="11" height="13" viewBox="0 0 11 13"><path d="M1 11.5H9.5V4.5L5.25 1L1 4.5Z" fill="#fcfcfc" stroke="#c4c4c8"/><path d="M3 8H7.5" stroke="#c4c4c8"/></svg>
<div class="t" style="left:368.1px;top:440.50px;font-size:12px;line-height:17px;color:#a5a5a8;font-family:'Liberation Mono',monospace;">26</div>
<div class="t" style="left:427px;top:438.00px;font-size:14.6px;line-height:21px;color:#3a3a3a;font-family:'Liberation Mono',monospace;transform:scaleX(0.9132420091324202);transform-origin:0 0;"><span style="color:#3a3a3a">    </span><span style="color:#a39415">.</span><span style="color:#1f9e9e">height</span><span style="color:#8e82d2">(</span><span style="color:#6d3b76">'100%'</span><span style="color:#8e82d2">)</span></div>
<div class="t" style="left:368.1px;top:462.50px;font-size:12px;line-height:17px;color:#a5a5a8;font-family:'Liberation Mono',monospace;">27</div>
<div class="t" style="left:427px;top:460.00px;font-size:14.6px;line-height:21px;color:#3a3a3a;font-family:'Liberation Mono',monospace;transform:scaleX(0.9132420091324202);transform-origin:0 0;"><span style="color:#3a3a3a">    </span><span style="color:#a39415">.</span><span style="color:#1f9e9e">width</span><span style="color:#8e82d2">(</span><span style="color:#6d3b76">'100%'</span><span style="color:#8e82d2">)</span></div>
<div class="t" style="left:368.1px;top:484.50px;font-size:12px;line-height:17px;color:#a5a5a8;font-family:'Liberation Mono',monospace;">28</div>
<div class="t" style="left:427px;top:482.00px;font-size:14.6px;line-height:21px;color:#3a3a3a;font-family:'Liberation Mono',monospace;transform:scaleX(0.9132420091324202);transform-origin:0 0;"><span style="color:#3a3a3a">  </span><span style="color:#d67ccd">}</span></div>
<svg style="left:416px;top:484.5px;" width="11" height="13" viewBox="0 0 11 13"><path d="M1 11.5H9.5V4.5L5.25 1L1 4.5Z" fill="#fcfcfc" stroke="#c4c4c8"/><path d="M3 8H7.5" stroke="#c4c4c8"/></svg>
<div class="t" style="left:368.1px;top:506.50px;font-size:12px;line-height:17px;color:#a5a5a8;font-family:'Liberation Mono',monospace;">29</div>
<div class="t" style="left:427px;top:504.00px;font-size:14.6px;line-height:21px;color:#3a3a3a;font-family:'Liberation Mono',monospace;transform:scaleX(0.9132420091324202);transform-origin:0 0;"><span style="color:#d67ccd">}</span></div>
<svg style="left:416px;top:506.5px;" width="11" height="13" viewBox="0 0 11 13"><path d="M1 11.5H9.5V4.5L5.25 1L1 4.5Z" fill="#fcfcfc" stroke="#c4c4c8"/><path d="M3 8H7.5" stroke="#c4c4c8"/></svg>
<div class="a" style="left:1162px;top:372px;width:2px;height:18px;background:#000;"></div>
<div class="a" style="left:1818px;top:181px;width:10px;height:267px;background:#fbfbfb;border:1px solid #d6d6d6;border-right:none;box-sizing:border-box"></div>
<div class="a" style="left:1819px;top:370px;width:9px;height:21px;background:#ecdcd6;"></div>
<div class="a" style="left:363px;top:524px;width:1465px;height:1px;background:#d5d5d5;"></div>
<div class="t" style="left:373px;top:527.00px;font-size:13px;line-height:19px;color:#454545;">Index</div>
<div class="t" style="left:429px;top:527.00px;font-size:13px;line-height:19px;color:#454545;">build()</div>
<div class="t" style="left:490px;top:527.00px;font-size:13px;line-height:19px;color:#454545;">RelativeContainer</div>
<div class="t" style="left:615px;top:527.00px;font-size:13px;line-height:19px;color:#454545;">callback for onClick()</div>
<svg style="left:416px;top:534px;" width="5" height="8" viewBox="0 0 5 8"><path d="M0.5 0.5L3 3L0.5 5.5" fill="none" stroke="#8a8a8a" stroke-width="1"/></svg>
<svg style="left:478px;top:534px;" width="5" height="8" viewBox="0 0 5 8"><path d="M0.5 0.5L3 3L0.5 5.5" fill="none" stroke="#8a8a8a" stroke-width="1"/></svg>
<svg style="left:602px;top:534px;" width="5" height="8" viewBox="0 0 5 8"><path d="M0.5 0.5L3 3L0.5 5.5" fill="none" stroke="#8a8a8a" stroke-width="1"/></svg>
</div>
<div class="a" style="left:23px;top:548px;width:1805px;height:330px;background:#fcfcfc;"></div>
<div class="a" style="left:23px;top:548px;width:1805px;height:1px;background:#d0d0d0;"></div>
<div class="a" style="left:23px;top:575px;width:1805px;height:1px;background:#d5d5d5;"></div>
<div class="t" style="left:29px;top:553.00px;font-size:13px;line-height:19px;color:#1a1a1a;">Run:</div>
<svg style="left:74px;top:553px;" width="18" height="18" viewBox="0 0 18 18"><path d="M7 1L10.5 7H3.5Z" fill="#555"/><circle cx="3.5" cy="12.5" r="2.8" fill="#555"/><rect x="8" y="10" width="6" height="6" fill="#e8c22e"/><circle cx="13.5" cy="15.5" r="2.6" fill="#2fbf3a"/></svg>
<div class="t" style="left:93px;top:553.00px;font-size:13px;line-height:19px;color:#1a1a1a;">entry</div>
<svg style="left:129px;top:559px;" width="9" height="9" viewBox="0 0 9 9"><path d="M0.5 0.5L8 8M8 0.5L0.5 8" stroke="#b5b5b5" stroke-width="1"/></svg>
<div class="a" style="left:61px;top:572px;width:87px;height:3px;background:#a9b5c1;"></div>
<svg style="left:1783px;top:556px;" width="13" height="13" viewBox="0 0 13 13"><rect x="5.2" y="0.3" width="2.6" height="12.4" rx="0.6" fill="#6e6e6e" transform="rotate(0 6.5 6.5)"/><rect x="5.2" y="0.3" width="2.6" height="12.4" rx="0.6" fill="#6e6e6e" transform="rotate(60 6.5 6.5)"/><rect x="5.2" y="0.3" width="2.6" height="12.4" rx="0.6" fill="#6e6e6e" transform="rotate(120 6.5 6.5)"/><circle cx="6.5" cy="6.5" r="4.7" fill="#6e6e6e"/><circle cx="6.5" cy="6.5" r="2" fill="#fcfcfc"/></svg>
<div class="a" style="left:1809px;top:561px;width:12px;height:2px;background:#6e6e6e;"></div>
<div class="a" style="left:51px;top:576px;width:1px;height:302px;background:#d5d5d5;"></div>
<div class="a" style="left:80px;top:576px;width:1px;height:302px;background:#d5d5d5;"></div>
<svg style="left:30px;top:584px;" width="15" height="14" viewBox="0 0 15 14"><path d="M3 11.5A5 5 0 1 1 10.8 4.5" fill="none" stroke="#3f9f55" stroke-width="2"/><path d="M8.5 1L13 4L9 7.5Z" fill="#3f9f55"/><rect x="9" y="8.5" width="5" height="5" fill="#6e6e6e"/></svg>
<svg style="left:30px;top:608px;" width="15" height="15" viewBox="0 0 15 15"><path d="M1.5 13.5L8 7" stroke="#6e6e6e" stroke-width="2.6" stroke-linecap="round"/><path d="M7 4.5A4 4 0 0 1 12.8 1.2L10 4L11 5L13.8 2.2A4 4 0 0 1 10.5 8Z" fill="#6e6e6e"/></svg>
<div class="a" style="left:27px;top:632px;width:20px;height:1px;background:#d5d5d5;"></div>
<div class="a" style="left:27px;top:665px;width:20px;height:1px;background:#d5d5d5;"></div>
<div class="a" style="left:27px;top:698px;width:20px;height:1px;background:#d5d5d5;"></div>
<div class="a" style="left:32px;top:644px;width:10px;height:10px;background:#db5860;"></div>
<svg style="left:31px;top:676px;" width="13" height="11" viewBox="0 0 13 11"><rect x="0" y="0" width="5.5" height="4" fill="#6e6e6e"/><rect x="7" y="0" width="5.5" height="4" fill="#6e6e6e"/><rect x="0" y="6" width="12.5" height="4" fill="#6e6e6e"/></svg>
<svg style="left:30px;top:708px;" width="15" height="15" viewBox="0 0 15 15"><path d="M9 1L14 6L11.5 7L8.5 10L8 12.5L2.5 7L5 6.5L8 3.5Z" fill="#6e6e6e"/><path d="M5.5 9.5L1 14" stroke="#6e6e6e" stroke-width="1.8"/></svg>
<svg style="left:60px;top:584px;" width="12" height="13" viewBox="0 0 12 13"><path d="M6 12.5V1.5M1.5 6L6 1.5L10.5 6" fill="none" stroke="#b4b4b4" stroke-width="1.6"/></svg>
<svg style="left:60px;top:611px;" width="12" height="13" viewBox="0 0 12 13"><path d="M6 0.5V11.5M1.5 7L6 11.5L10.5 7" fill="none" stroke="#b4b4b4" stroke-width="1.6"/></svg>
<div class="a" style="left:55px;top:632px;width:22px;height:21px;background:#dcdcde;border-radius:3px"></div>
<svg style="left:59px;top:636px;" width="14" height="13" viewBox="0 0 14 13"><path d="M0 1.5H12M0 5.5H10.5A2.2 2.2 0 0 1 10.5 10H6" fill="none" stroke="#6e6e6e" stroke-width="1.5"/><path d="M7 8L4.5 10L7 12Z" fill="#6e6e6e"/><path d="M0 10H3" stroke="#6e6e6e" stroke-width="1.5"/></svg>
<div class="a" style="left:55px;top:658px;width:22px;height:21px;background:#dcdcde;border-radius:3px"></div>
<svg style="left:59px;top:662px;" width="14" height="13" viewBox="0 0 14 13"><path d="M0 1.5H5M0 6H5M0 12H13M9.5 0V8M6.5 5.5L9.5 8.5L12.5 5.5" fill="none" stroke="#6e6e6e" stroke-width="1.5"/></svg>
<svg style="left:59px;top:689px;" width="14" height="13" viewBox="0 0 14 13"><rect x="3" y="0" width="8" height="3" fill="#6e6e6e"/><rect x="0" y="4" width="14" height="6" rx="1" fill="#6e6e6e"/><rect x="3" y="8" width="8" height="5" fill="#fcfcfc" stroke="#6e6e6e" stroke-width="1.4"/></svg>
<svg style="left:60px;top:713px;" width="12" height="14" viewBox="0 0 12 14"><rect x="0" y="1.5" width="12" height="2" fill="#6e6e6e"/><rect x="4" y="0" width="4" height="2" fill="#6e6e6e"/><path d="M1.5 4.5H10.5L9.8 13.5H2.2Z" fill="#6e6e6e"/></svg>
<div class="t" style="left:92px;top:600.50px;font-size:14.6px;line-height:21px;color:#1a1a1a;font-family:'Liberation Mono',monospace;transform:scaleX(0.9132420091324202);transform-origin:0 0;">18:07:18.113: Build task in 3 s 88 ms</div>
<div class="t" style="left:92px;top:622.50px;font-size:14.6px;line-height:21px;color:#1a1a1a;font-family:'Liberation Mono',monospace;transform:scaleX(0.9132420091324202);transform-origin:0 0;">18:07:18.114: Launching com.huawei.myapplication</div>
<div class="t" style="left:92px;top:644.50px;font-size:14.6px;line-height:21px;color:#1a1a1a;font-family:'Liberation Mono',monospace;transform:scaleX(0.9132420091324202);transform-origin:0 0;">18:07:18.114: $ hdc shell aa force-stop com.huawei.myapplication</div>
<div class="t" style="left:92px;top:666.50px;font-size:14.6px;line-height:21px;color:#1a1a1a;font-family:'Liberation Mono',monospace;transform:scaleX(0.9132420091324202);transform-origin:0 0;">18:07:18.300: $ hdc shell mkdir data/local/tmp/ecc96f780e244a45a2f9f8fde1cdcf26</div>
<div class="t" style="left:92px;top:688.50px;font-size:14.6px;line-height:21px;color:#1a1a1a;font-family:'Liberation Mono',monospace;transform:scaleX(0.9132420091324202);transform-origin:0 0;">18:07:18.346: $ hdc file send D:\huaweiProjects\MyApplication9\entry\build\default\outputs\default\entry-default-signed.hap "data/local/tmp/ecc96f780e244a45a2f9f8fde1cdcf26"</div>
<div class="t" style="left:92px;top:710.50px;font-size:14.6px;line-height:21px;color:#1a1a1a;font-family:'Liberation Mono',monospace;transform:scaleX(0.9132420091324202);transform-origin:0 0;">18:07:18.592: $ hdc shell bm install -p data/local/tmp/ecc96f780e244a45a2f9f8fde1cdcf26  in 246 ms</div>
<div class="t" style="left:92px;top:732.50px;font-size:14.6px;line-height:21px;color:#1a1a1a;font-family:'Liberation Mono',monospace;transform:scaleX(0.9132420091324202);transform-origin:0 0;">18:07:18.623: $ hdc shell rm -rf data/local/tmp/ecc96f780e244a45a2f9f8fde1cdcf26</div>
<div class="t" style="left:92px;top:754.50px;font-size:14.6px;line-height:21px;color:#1a1a1a;font-family:'Liberation Mono',monospace;transform:scaleX(0.9132420091324202);transform-origin:0 0;">18:07:18.816: $ hdc shell aa start -a EntryAbility -b com.huawei.myapplication in 147 ms</div>
<div class="t" style="left:92px;top:776.50px;font-size:14.6px;line-height:21px;color:#1a1a1a;font-family:'Liberation Mono',monospace;transform:scaleX(0.9132420091324202);transform-origin:0 0;">18:07:18.816: com.huawei.myapplication successfully launched within 702 ms</div>
<div class="clip" style="width:1851px;height:878px"></div>
<div class="a" style="left:0px;top:878px;width:1851px;height:24px;background:#fcfcfc;"></div>
<div class="a" style="left:0px;top:878px;width:1851px;height:1px;background:#d1d1d1;"></div>
<div class="a" style="left:145px;top:879px;width:56px;height:22px;background:#bababa;"></div>
<div class="a" style="left:0px;top:901px;width:1851px;height:1px;background:#d2d2d2;"></div>
<div class="a" style="left:652px;top:879px;width:55px;height:22px;background:#d9d9d9;"></div>
<div class="t" style="left:52px;top:882.50px;font-size:12px;line-height:17px;color:#1a1a1a;">Version Control</div>
<div class="t" style="left:171px;top:882.50px;font-size:12px;line-height:17px;color:#1a1a1a;">Run</div>
<div class="t" style="left:212px;top:882.50px;font-size:12px;line-height:17px;color:#1a1a1a;">UI Generation</div>
<div class="t" style="left:329px;top:882.50px;font-size:12px;line-height:17px;color:#1a1a1a;">Operation Analyzer</div>
<div class="t" style="left:473px;top:882.50px;font-size:12px;line-height:17px;color:#1a1a1a;">Profiler</div>
<div class="t" style="left:548px;top:882.50px;font-size:12px;line-height:17px;color:#1a1a1a;">Build</div>
<div class="t" style="left:611px;top:882.50px;font-size:12px;line-height:17px;color:#1a1a1a;">TODO</div>
<div class="t" style="left:679px;top:882.50px;font-size:12px;line-height:17px;color:#1a1a1a;">Log</div>
<div class="t" style="left:735px;top:882.50px;font-size:12px;line-height:17px;color:#1a1a1a;">Problems</div>
<div class="t" style="left:822px;top:882.50px;font-size:12px;line-height:17px;color:#1a1a1a;">Terminal</div>
<div class="t" style="left:905px;top:882.50px;font-size:12px;line-height:17px;color:#1a1a1a;">Services</div>
<div class="t" style="left:985px;top:882.50px;font-size:12px;line-height:17px;color:#1a1a1a;">Code Linter</div>
<div class="t" style="left:1086px;top:882.50px;font-size:12px;line-height:17px;color:#1a1a1a;">ArkUI Inspector</div>
<svg style="left:37px;top:884px;" width="10" height="14" viewBox="0 0 10 14"><circle cx="2.5" cy="2" r="1.8" fill="#6e6e6e"/><path d="M2.5 2V13M8 2.5C8 7 2.5 6 2.5 10" fill="none" stroke="#6e6e6e" stroke-width="1.6"/><circle cx="8" cy="2" r="1.8" fill="#6e6e6e"/></svg>
<svg style="left:156px;top:886px;" width="12" height="12" viewBox="0 0 12 12"><path d="M0 0.3L8 4.6L0 8.9Z" fill="#6a6a6a"/><circle cx="9.3" cy="8.9" r="2.5" fill="#1ed21e"/></svg>
<svg style="left:310px;top:884px;" width="14" height="13" viewBox="0 0 14 13"><path d="M0.7 0V12.3H13.5" fill="none" stroke="#6e6e6e" stroke-width="1.2"/><path d="M2.5 10L5.5 4.5L8 8L12.5 1.5" fill="none" stroke="#6e6e6e" stroke-width="1.2"/></svg>
<svg style="left:454px;top:884px;" width="14" height="13" viewBox="0 0 14 13"><path d="M0.5 5L13.5 0.5L9 12.5L6.5 7.5Z" fill="#6e6e6e"/><path d="M6.5 7.5L3 12" stroke="#6e6e6e" stroke-width="1.4"/></svg>
<svg style="left:530px;top:884px;" width="13" height="13" viewBox="0 0 13 13"><path d="M1 12L7 6" stroke="#6e6e6e" stroke-width="2"/><path d="M3.5 3.5L7 0.5L12 5L10 7Z" fill="#6e6e6e"/></svg>
<svg style="left:595px;top:885px;" width="12" height="11" viewBox="0 0 12 11"><rect x="0" y="0.5" width="2" height="2" fill="#6e6e6e"/><rect x="0" y="4.5" width="2" height="2" fill="#6e6e6e"/><rect x="0" y="8.5" width="2" height="2" fill="#6e6e6e"/><rect x="3.5" y="1" width="8" height="1.2" fill="#6e6e6e"/><rect x="3.5" y="5" width="8" height="1.2" fill="#6e6e6e"/><rect x="3.5" y="9" width="8" height="1.2" fill="#6e6e6e"/></svg>
<svg style="left:662px;top:884px;" width="13" height="12" viewBox="0 0 13 12"><rect x="0" y="1" width="13" height="11" fill="#6e6e6e"/><rect x="2.5" y="0" width="1.5" height="1.5" fill="#6e6e6e"/><rect x="9.5" y="0" width="1.5" height="1.5" fill="#6e6e6e"/><path d="M2 3.8H11M2 6.8H5.5M2 9.8H11" stroke="#e8e8e8" stroke-width="1"/></svg>
<svg style="left:719px;top:884px;" width="12" height="12" viewBox="0 0 12 12"><circle cx="6" cy="6" r="6" fill="#6e6e6e"/><rect x="5.2" y="2.5" width="1.6" height="4.5" fill="#fcfcfc"/><rect x="5.2" y="8" width="1.6" height="1.6" fill="#fcfcfc"/></svg>
<svg style="left:806px;top:885px;" width="12" height="11" viewBox="0 0 12 11"><rect x="0" y="0" width="12" height="11" fill="#6e6e6e"/><path d="M2.5 2.5L5 5L2.5 7.5M6 8.5H10" fill="none" stroke="#f2f2f2" stroke-width="1.2"/></svg>
<svg style="left:887px;top:884px;" width="14" height="13" viewBox="0 0 14 13"><path d="M4 0.5H10L13.5 6.5L10 12.5H4L0.5 6.5Z" fill="#6e6e6e"/><path d="M5.5 3.5L9.5 6.5L5.5 9.5Z" fill="#fcfcfc"/></svg>
<svg style="left:967px;top:884px;" width="14" height="14" viewBox="0 0 14 14"><circle cx="6.5" cy="6.5" r="5.3" fill="none" stroke="#6e6e6e" stroke-width="1.8"/><path d="M10 10L13.5 13.5" stroke="#6e6e6e" stroke-width="2"/><path d="M4 6.5L6 8.5L9 4.5" fill="none" stroke="#6e6e6e" stroke-width="1.4"/></svg>
<svg style="left:1068px;top:884px;" width="13" height="13" viewBox="0 0 13 13"><rect x="0.7" y="0.7" width="11.6" height="11.6" fill="none" stroke="#6e6e6e" stroke-width="1.4"/><path d="M0.7 4H12.3M4 4V12.3M4 7.5H12.3" stroke="#6e6e6e" stroke-width="1.3"/></svg>
<svg style="left:668px;top:894px;" width="9" height="13" viewBox="0 0 9 13"><path d="M0.5 0.5V11L3 8.5L5 12.5L6.5 11.8L4.6 8H8Z" fill="#fff" stroke="#0a0a28" stroke-width="1"/></svg>
<div class="a" style="left:1829px;top:30px;width:22px;height:848px;background:#fcfcfc;"></div>
<div class="a" style="left:1828px;top:30px;width:1px;height:848px;background:#d1d1d1;"></div>
<div class="a" style="left:1831px;top:60px;width:16px;height:10px;overflow:visible"><div style="position:absolute;left:16px;top:0;height:16px;transform-origin:0 0;transform:rotate(90deg);font-size:12px;line-height:16px;color:#1a1a1a;white-space:pre">AppAnalyzer</div></div>
<div class="a" style="left:1831px;top:173px;width:16px;height:10px;overflow:visible"><div style="position:absolute;left:16px;top:0;height:16px;transform-origin:0 0;transform:rotate(90deg);font-size:12px;line-height:16px;color:#1a1a1a;white-space:pre">ObfuscationHelper</div></div>
<div class="a" style="left:1831px;top:315px;width:16px;height:10px;overflow:visible"><div style="position:absolute;left:16px;top:0;height:16px;transform-origin:0 0;transform:rotate(90deg);font-size:12.6px;line-height:16px;color:#1a1a1a;white-space:pre">Notifications</div></div>
<div class="a" style="left:1831px;top:427px;width:16px;height:10px;overflow:visible"><div style="position:absolute;left:16px;top:0;height:16px;transform-origin:0 0;transform:rotate(90deg);font-size:11.2px;line-height:16px;color:#1a1a1a;white-space:pre">CodeGenie</div></div>
<div class="a" style="left:1831px;top:522px;width:16px;height:10px;overflow:visible"><div style="position:absolute;left:16px;top:0;height:16px;transform-origin:0 0;transform:rotate(90deg);font-size:11.3px;line-height:16px;color:#1a1a1a;white-space:pre">Previewer</div></div>
<div class="a" style="left:1831px;top:765px;width:16px;height:10px;overflow:visible"><div style="position:absolute;left:16px;top:0;height:16px;transform-origin:0 0;transform:rotate(90deg);font-size:11.2px;line-height:16px;color:#1a1a1a;white-space:pre">Device File Browser</div></div>
<svg style="left:1832px;top:42px;" width="14" height="14" viewBox="0 0 14 14"><circle cx="7" cy="7" r="5.8" fill="none" stroke="#6e6e6e" stroke-width="1.3"/><path d="M4 5H10M4 8.5H10M7 3V11" stroke="#6e6e6e" stroke-width="1.3"/><circle cx="7" cy="1.2" r="1.2" fill="#6e6e6e"/><circle cx="1.5" cy="10" r="1.2" fill="#6e6e6e"/><circle cx="12.5" cy="10" r="1.2" fill="#6e6e6e"/></svg>
<svg style="left:1832px;top:154px;" width="14" height="13" viewBox="0 0 14 13"><path d="M0.5 3.5V0.5H3.5M10.5 0.5H13.5V3.5M13.5 9.5V12.5H10.5M3.5 12.5H0.5V9.5" fill="none" stroke="#6e6e6e" stroke-width="1.2"/><path d="M3.5 3L7 2L10.5 3V6.5Q10.5 9.5 7 11Q3.5 9.5 3.5 6.5Z" fill="#6e6e6e"/></svg>
<svg style="left:1832px;top:297px;" width="14" height="14" viewBox="0 0 14 14"><path d="M2 11V6.5A4.5 4.5 0 0 1 11 6.5V11H12.5V12H0.5V11Z" fill="#6e6e6e"/><rect x="5.5" y="12.5" width="3" height="1.5" fill="#6e6e6e"/><circle cx="11.5" cy="2.5" r="2.5" fill="#3b8be8"/></svg>
<svg style="left:1832px;top:408px;" width="13" height="13" viewBox="0 0 13 13"><path d="M6.5 0L12.5 3.2V9.8L6.5 13L0.5 9.8V3.2Z" fill="#6e6e6e"/><path d="M6.5 3.5V9.5M4 5V8M9 5V8" stroke="#f7f7f9" stroke-width="1.2"/></svg>
<svg style="left:1832px;top:506px;" width="14" height="10" viewBox="0 0 14 10"><path d="M0.5 5Q7 -2.5 13.5 5Q7 12.5 0.5 5Z" fill="none" stroke="#6e6e6e" stroke-width="1.3"/><circle cx="7" cy="5" r="2" fill="#6e6e6e"/></svg>
<svg style="left:1833px;top:746px;" width="12" height="12" viewBox="0 0 12 12"><rect x="1" y="0.7" width="9" height="10.6" fill="none" stroke="#6a9ea6" stroke-width="1.3"/></svg>
<div class="a" style="left:1330px;top:104px;width:354px;height:765px;background:linear-gradient(to bottom,#484848 0,#484848 530px,#cdc6bb 536px,#cdc6bb 100%);border-radius:44px"></div>
<div class="a" style="left:1332px;top:106px;width:350px;height:761px;background:linear-gradient(to bottom,#9a9a9a 0,#9a9a9a 530px,#f2efea 536px,#f2efea 100%);border-radius:42px"></div>
<div class="a" style="left:1333px;top:107px;width:348px;height:759px;background:linear-gradient(to bottom,#3a3a3a 0,#3a3a3a 530px,#b9b4ac 536px,#b9b4ac 100%);border-radius:41px"></div>
<div class="a" style="left:1334px;top:107px;width:346px;height:757px;background:linear-gradient(to bottom,#d9d9d9 0,#a8a8a8 5px,#5a5a5a 6px,#000 6.8px,#000 20px,#cfcfcf 38px,#cfcfcf 527px,#dedad3 534px,#dedad3 712px,#000 722px,#000 754px,#999 100%);border-radius:40px"></div>
<div class="a" style="left:1336px;top:118px;width:342px;height:739px;background:#fdfdfd;border-radius:37px / 30px"></div>
<div class="t" style="left:1347px;top:128.00px;font-size:13px;line-height:19px;color:#000;-webkit-text-stroke:0.35px #000;">06:07</div>
<div class="a" style="left:1470px;top:127px;width:20px;height:20px;border-radius:50%;background:#000"></div>
<div class="a" style="left:1497px;top:127px;width:20px;height:20px;border-radius:50%;background:#000"></div>
<div class="a" style="left:1525px;top:127px;width:20px;height:20px;border-radius:50%;background:#000"></div>
<svg style="left:1631px;top:133px;" width="9" height="10" viewBox="0 0 9 10"><rect x="0" y="0" width="8" height="10" rx="1.5" fill="#111"/><rect x="3.2" y="2" width="1.6" height="3" fill="#fff"/><rect x="3.2" y="6" width="1.6" height="1.6" fill="#fff"/></svg>
<svg style="left:1643px;top:132px;" width="24" height="12" viewBox="0 0 24 12"><rect x="0.6" y="0.6" width="20.8" height="10.8" rx="3.5" fill="#ddd" stroke="#111" stroke-width="1.2"/><rect x="22" y="3.5" width="1.5" height="5" fill="#111"/><text x="11" y="9.3" font-family="Liberation Sans" font-size="9" font-weight="bold" text-anchor="middle" fill="#111">100</text></svg>
<div class="t" style="left:1408px;top:466.50px;font-size:37px;line-height:52px;color:#303030;font-weight:bold;transform:scaleX(0.959);transform-origin:0 0;">Hello World</div>
<div class="a" style="left:1457px;top:847px;width:100px;height:4px;background:#b8b8b8;border-radius:2px"></div>
<div class="a" style="left:1698px;top:370px;width:4px;height:21px;background:#f6f1d4;"></div>
<div class="a" style="left:1764px;top:370px;width:4px;height:21px;background:#f6f1d4;"></div>
<div class="a" style="left:1703px;top:224px;width:60px;height:526px;background:#fcfcfc;border:6px solid #d4d4d4;border-radius:16px;box-sizing:border-box"></div>
<div class="a" style="left:1707px;top:228px;width:52px;height:518px;background:transparent;border:2px solid #bababa;border-radius:12px;box-sizing:border-box"></div>
<div class="a" style="left:1717px;top:245.5px;width:8px;height:1.6px;background:#222;"></div>
<svg style="left:1739px;top:240px;" width="11" height="11" viewBox="0 0 11 11"><path d="M1 1L10 10M10 1L1 10" stroke="#222" stroke-width="1.2"/></svg>
<svg style="left:1726px;top:275px;" width="15" height="14" viewBox="0 0 15 14"><path d="M0 1H14M0 7H14M0 13H14" stroke="#444" stroke-width="1.6"/></svg>
<svg style="left:1725px;top:314px;" width="17" height="18" viewBox="0 0 17 18"><path d="M2.5 1H16M9 17V4.5M5.5 8L9 4.5L12.5 8M1 1L16.5 16.5" fill="none" stroke="#222" stroke-width="1.3"/></svg>
<svg style="left:1724px;top:355px;" width="18" height="17" viewBox="0 0 18 17"><path d="M0.5 2.5H3.5M3.5 0V10.5A2 2 0 0 0 5.5 12.5H17M5 2.5H11.5A2 2 0 0 1 13.5 4.5V16.5" fill="none" stroke="#222" stroke-width="1.4"/></svg>
<svg style="left:1724px;top:393px;" width="18" height="18" viewBox="0 0 18 18"><path d="M1 9.5A8 8 0 1 1 5 16.43" fill="none" stroke="#222" stroke-width="1.3"/><path d="M-0.8 8.6H3L1.1 12.2Z" fill="#222"/><rect x="6.2" y="6.9" width="5.6" height="5.6" rx="1" fill="none" stroke="#222" stroke-width="1.3"/></svg>
<svg style="left:1724px;top:433px;" width="18" height="18" viewBox="0 0 18 18"><path d="M17 9.5A8 8 0 1 0 13 16.43" fill="none" stroke="#222" stroke-width="1.3"/><path d="M18.8 8.6H15L16.9 12.2Z" fill="#222"/><rect x="6.2" y="6.9" width="5.6" height="5.6" rx="1" fill="none" stroke="#222" stroke-width="1.3"/></svg>
<svg style="left:1725px;top:476px;" width="17" height="14" viewBox="0 0 17 14"><path d="M0.7 4H3.5L8 0.7V13.3L3.5 10H0.7Z" fill="none" stroke="#222" stroke-width="1.3"/><path d="M10.5 7H16M13.25 4.25V9.75" stroke="#222" stroke-width="1.3"/></svg>
<svg style="left:1725px;top:516px;" width="17" height="14" viewBox="0 0 17 14"><path d="M0.7 4H3.5L8 0.7V13.3L3.5 10H0.7Z" fill="none" stroke="#222" stroke-width="1.3"/><path d="M10.5 7H16" stroke="#222" stroke-width="1.3"/></svg>
<svg style="left:1724px;top:553px;" width="18" height="19" viewBox="0 0 18 19"><rect x="5" y="1.5" width="8.5" height="15" rx="1.5" fill="none" stroke="#222" stroke-width="1.3" transform="rotate(15 9 9.5)"/><path d="M2.5 6Q0.5 9.5 2.5 13M15.5 6Q17.5 9.5 15.5 13" fill="none" stroke="#222" stroke-width="1.2"/></svg>
<svg style="left:1725px;top:635px;" width="16" height="17" viewBox="0 0 16 17"><path d="M1.5 8.5L14.5 1V16Z" fill="none" stroke="#333" stroke-width="1.5" stroke-linejoin="round"/></svg>
<svg style="left:1725px;top:676px;" width="17" height="17" viewBox="0 0 17 17"><circle cx="8" cy="8" r="7.3" fill="none" stroke="#333" stroke-width="1.4"/></svg>
<svg style="left:1726px;top:717px;" width="15" height="15" viewBox="0 0 15 15"><rect x="0.7" y="0.7" width="13.6" height="13.6" rx="2.5" fill="none" stroke="#333" stroke-width="1.4"/></svg>
<div class="a" style="left:0;top:0;width:1px;height:902px;background:#b2b2b2"></div>
</body></html>
